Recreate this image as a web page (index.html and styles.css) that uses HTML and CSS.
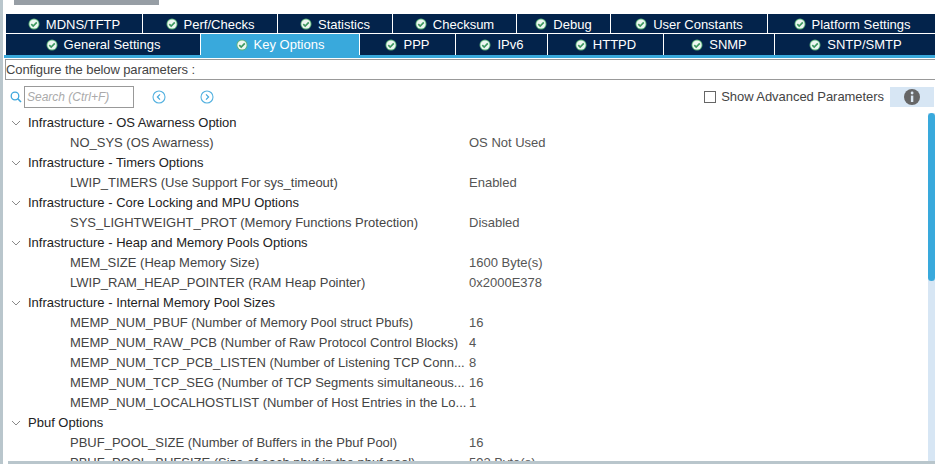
FILE: index.html
```html
<!DOCTYPE html>
<html lang="en">
<head>
<meta charset="utf-8">
<title>Key Options</title>
<link rel="stylesheet" href="styles.css">
</head>
<body>
<svg width="0" height="0" class="defs">
  <symbol id="ok" viewBox="0 0 12 12">
    <circle cx="6" cy="6" r="5.5" fill="#5cb27a"/>
    <circle cx="6" cy="6" r="4.6" fill="#eef7f1"/>
    <path d="M3.3 6.1 5.2 8 8.8 4.3" fill="none" stroke="#3f9a60" stroke-width="1.7"/>
  </symbol>
</svg>
<div class="app">
  <div class="rail"></div>
  <main class="main">
    <div class="topbar"><div class="progress"></div></div>
    <nav class="tabs">
      <div class="tabrow row-a">
        <div class="tab"><svg class="ok"><use href="#ok"/></svg>MDNS/TFTP</div>
        <div class="tab"><svg class="ok"><use href="#ok"/></svg>Perf/Checks</div>
        <div class="tab"><svg class="ok"><use href="#ok"/></svg>Statistics</div>
        <div class="tab"><svg class="ok"><use href="#ok"/></svg>Checksum</div>
        <div class="tab"><svg class="ok"><use href="#ok"/></svg>Debug</div>
        <div class="tab"><svg class="ok"><use href="#ok"/></svg>User Constants</div>
        <div class="tab"><svg class="ok"><use href="#ok"/></svg>Platform Settings</div>
      </div>
      <div class="tabrow row-b">
        <div class="tab"><svg class="ok"><use href="#ok"/></svg>General Settings</div>
        <div class="tab active"><svg class="ok"><use href="#ok"/></svg>Key Options</div>
        <div class="tab"><svg class="ok"><use href="#ok"/></svg>PPP</div>
        <div class="tab"><svg class="ok"><use href="#ok"/></svg>IPv6</div>
        <div class="tab"><svg class="ok"><use href="#ok"/></svg>HTTPD</div>
        <div class="tab"><svg class="ok"><use href="#ok"/></svg>SNMP</div>
        <div class="tab"><svg class="ok"><use href="#ok"/></svg>SNTP/SMTP</div>
      </div>
      <div class="tabline"></div>
    </nav>
    <div class="configure">Configure the below parameters :</div>
    <div class="toolbar">
      <svg class="search-icon" viewBox="0 0 12 12"><circle cx="5" cy="5" r="3.8" fill="none" stroke="#3fa7dc" stroke-width="1.3"/><path d="M7.8 7.8 11 11" stroke="#3fa7dc" stroke-width="1.6"/></svg>
      <div class="search">Search (Ctrl+F)</div>
      <svg class="nav-btn prev" viewBox="0 0 14 14"><circle cx="7" cy="7" r="6" fill="none" stroke="#55b2e0" stroke-width="1.1"/><path d="M8 4.4 5.4 7 8 9.6" fill="none" stroke="#3fa7dc" stroke-width="1.2"/></svg>
      <svg class="nav-btn next" viewBox="0 0 14 14"><circle cx="7" cy="7" r="6" fill="none" stroke="#55b2e0" stroke-width="1.1"/><path d="M6 4.4 8.6 7 6 9.6" fill="none" stroke="#3fa7dc" stroke-width="1.2"/></svg>
      <label class="advanced"><span class="checkbox"></span>Show Advanced Parameters</label>
      <div class="info"><svg viewBox="0 0 16 16" class="info-icon"><circle cx="8" cy="8" r="8" fill="#666"/><rect x="6.9" y="6.6" width="2.4" height="6.4" fill="#dbe7f2"/><circle cx="8.1" cy="4" r="1.4" fill="#dbe7f2"/></svg></div>
    </div>
    <div class="tree-wrap">
      <div class="tree">
        <div class="group"><svg class="chev" viewBox="0 0 10 6"><path d="M1 1l4 4 4-4" fill="none" stroke="#8a8a8a"/></svg>Infrastructure - OS Awarness Option</div>
        <div class="param"><span class="name">NO_SYS (OS Awarness)</span><span class="value">OS Not Used</span></div>
        <div class="group"><svg class="chev" viewBox="0 0 10 6"><path d="M1 1l4 4 4-4" fill="none" stroke="#8a8a8a"/></svg>Infrastructure - Timers Options</div>
        <div class="param"><span class="name">LWIP_TIMERS (Use Support For sys_timeout)</span><span class="value">Enabled</span></div>
        <div class="group"><svg class="chev" viewBox="0 0 10 6"><path d="M1 1l4 4 4-4" fill="none" stroke="#8a8a8a"/></svg>Infrastructure - Core Locking and MPU Options</div>
        <div class="param"><span class="name">SYS_LIGHTWEIGHT_PROT (Memory Functions Protection)</span><span class="value">Disabled</span></div>
        <div class="group"><svg class="chev" viewBox="0 0 10 6"><path d="M1 1l4 4 4-4" fill="none" stroke="#8a8a8a"/></svg>Infrastructure - Heap and Memory Pools Options</div>
        <div class="param"><span class="name">MEM_SIZE (Heap Memory Size)</span><span class="value">1600 Byte(s)</span></div>
        <div class="param"><span class="name">LWIP_RAM_HEAP_POINTER (RAM Heap Pointer)</span><span class="value">0x2000E378</span></div>
        <div class="group"><svg class="chev" viewBox="0 0 10 6"><path d="M1 1l4 4 4-4" fill="none" stroke="#8a8a8a"/></svg>Infrastructure - Internal Memory Pool Sizes</div>
        <div class="param"><span class="name">MEMP_NUM_PBUF (Number of Memory Pool struct Pbufs)</span><span class="value">16</span></div>
        <div class="param"><span class="name">MEMP_NUM_RAW_PCB (Number of Raw Protocol Control Blocks)</span><span class="value">4</span></div>
        <div class="param"><span class="name">MEMP_NUM_TCP_PCB_LISTEN (Number of Listening TCP Conn...</span><span class="value">8</span></div>
        <div class="param"><span class="name">MEMP_NUM_TCP_SEG (Number of TCP Segments simultaneous...</span><span class="value">16</span></div>
        <div class="param"><span class="name">MEMP_NUM_LOCALHOSTLIST (Number of Host Entries in the Lo...</span><span class="value">1</span></div>
        <div class="group"><svg class="chev" viewBox="0 0 10 6"><path d="M1 1l4 4 4-4" fill="none" stroke="#8a8a8a"/></svg>Pbuf Options</div>
        <div class="param"><span class="name">PBUF_POOL_SIZE (Number of Buffers in the Pbuf Pool)</span><span class="value">16</span></div>
        <div class="param"><span class="name">PBUF_POOL_BUFSIZE (Size of each pbuf in the pbuf pool)</span><span class="value">592 Byte(s)</span></div>
      </div>
      <div class="vscroll"><div class="thumb"></div></div>
      <div class="hscroll"></div>
    </div>
  </main>
</div>
</body>
</html>
```
FILE: styles.css
```css
* { box-sizing: border-box; }
html, body { margin: 0; height: 100%; overflow: hidden; background: #fff; }
body { font-family: "Liberation Sans", Arial, sans-serif; font-size: 13px; color: #333; }
.defs { position: absolute; }
.app { display: flex; height: 464px; width: 935px; }
.rail { width: 3px; background: #b9c6cc; flex: none; }
.main { flex: 1; display: flex; flex-direction: column; min-width: 0; }
.topbar { height: 14px; padding-left: 11px; flex: none; }
.progress { width: 145px; height: 5px; background: #979ea5; }
.tabs { display: flex; flex-direction: column; padding-left: 1px; flex: none; }
.tabrow { display: grid; margin-left: 2px; }
.row-a { height: 20px; grid-template-columns: 137px 135px 115px 124px 94px 157px 168px; }
.row-b { height: 21px; grid-template-columns: 195px 159px 96px 92px 116px 111px 161px; }
.tabline { height: 3px; background: #39a9dc; }
.tab {
  display: flex; align-items: center; justify-content: center; gap: 6px;
  background: #03234b; color: #fff; white-space: nowrap;
  border-right: 1px solid #fff; border-bottom: 1px solid #fff;
}
.row-a .tab { padding-top: 1px; }
.row-b .tab { border-bottom: 0; }
.tab:last-child { border-right: 0; }
.tab.active { background: #39a9dc; }
.ok { width: 12px; height: 12px; flex: none; }
.configure {
  height: 21px; margin: 1px 0 0 2px;
  line-height: 19px; color: #444; letter-spacing: -.1px;
  border: 1px solid #999; border-right: 0;
}
.toolbar { display: flex; align-items: center; height: 33px; flex: none; padding-left: 7px; }
.search-icon { width: 12px; height: 12px; flex: none; }
.search { width: 110px; height: 22px; margin-left: 2px; border: 1px solid #999; font-size: 12px; font-style: italic; color: #aaa; padding-left: 2px; line-height: 20px; }
.nav-btn { width: 14px; height: 14px; flex: none; }
.prev { margin-left: 18px; }
.next { margin-left: 34px; }
.advanced { margin-left: auto; display: flex; align-items: center; gap: 5px; color: #444; letter-spacing: -.05px; }
.checkbox { width: 12px; height: 12px; border: 1px solid #666; background: #fff; }
.info { width: 44px; height: 20px; margin-left: 6px; margin-right: 1px; background: #d7e6f4; display: flex; justify-content: center; align-items: center; }
.info-icon { width: 16px; height: 16px; }
.tree-wrap { flex: 1; position: relative; overflow: hidden; min-height: 0; }
.group, .param { height: 20px; line-height: 20px; white-space: nowrap; }
.group { display: flex; align-items: center; padding-left: 8px; color: #222; }
.chev { width: 10px; height: 6px; margin-right: 7px; flex: none; }
.param { display: flex; padding-left: 67px; color: #444; }
.name { width: 399px; flex: none; }
.value { color: #555; }
.vscroll { position: absolute; right: 0; top: 0; bottom: 0; width: 7px; background: #d7e6f4; }
.thumb { height: 168px; background: #39a9dc; border-radius: 4px; }
.hscroll { position: absolute; left: 5px; right: 0; bottom: 0; height: 3px; background: #b9c6cc; }
```
